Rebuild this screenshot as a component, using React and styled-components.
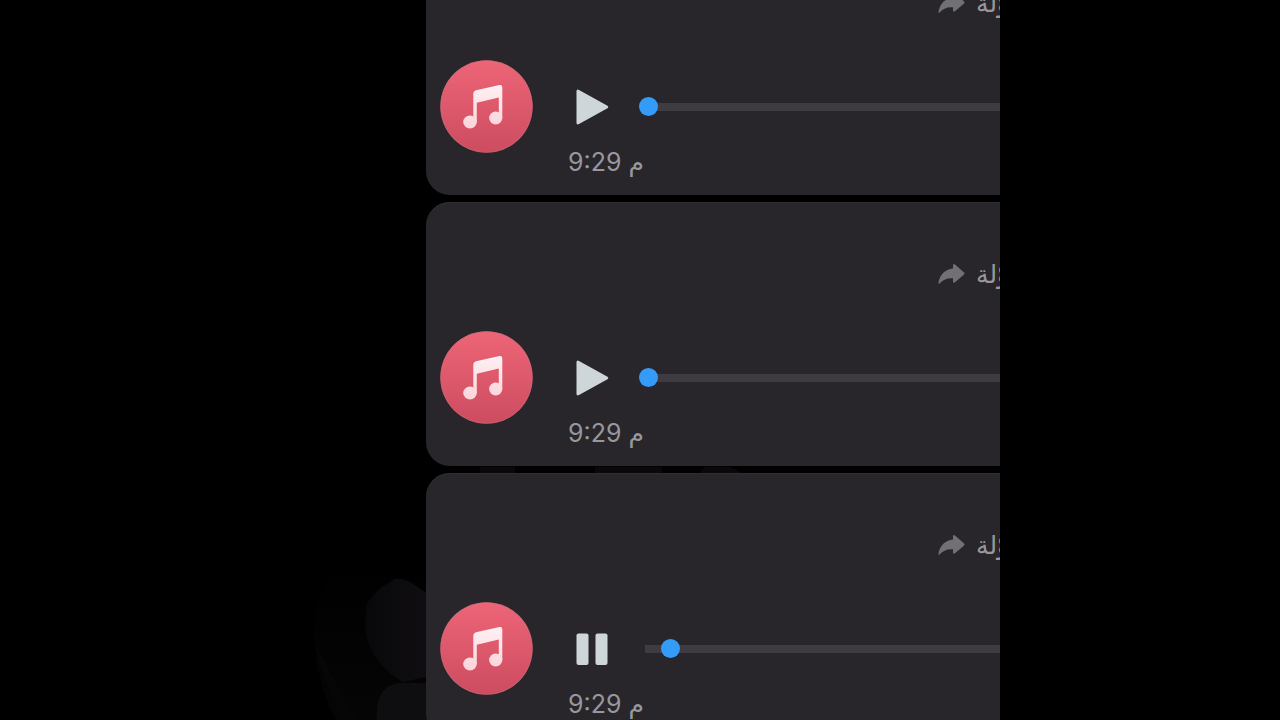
import React, { useState } from "react";
import styled, { createGlobalStyle } from "styled-components";

const GlobalStyle = createGlobalStyle`
  * { box-sizing: border-box; }
  body {
    margin: 0;
    background: #000;
    font-family: Inter, "DejaVu Sans", sans-serif;
  }
`;

const Page = styled.div`
  display: grid;
  grid-template-columns: 7fr 18fr 7fr;
  height: 100vh;
  overflow: hidden;
  background: #000;
`;

const Chat = styled.main`
  grid-column: 2;
  position: relative;
  min-width: 0;
  overflow: hidden;
`;

const Wallpaper = styled.svg`
  position: absolute;
  left: 0;
  bottom: 0;
  width: 480px;
  height: 260px;
`;

const Messages = styled.div`
  position: relative;
  display: flex;
  flex-direction: column;
  gap: 7px;
  margin-top: -69px;
  padding-left: 146px;
`;

const Bubble = styled.article`
  width: 720px;
  height: 264px;
  padding: 56px 20px 0 14px;
  border-radius: 24px;
  background: #28262b;
  box-shadow: inset 0 1px 0 #302e33;
`;

const Forwarded = styled.div`
  display: flex;
  align-items: center;
  gap: 11px;
  height: 32px;
  margin-left: 498px;
  color: #98979b;
  font-size: 25px;
  line-height: 30px;
  white-space: nowrap;
`;

const ForwardIcon = styled.svg`
  flex: none;
  width: 27px;
  height: 22px;
  fill: #717074;
`;

const Player = styled.div`
  display: grid;
  grid-template-columns: 92px 50px 1fr;
  column-gap: 36px;
  align-items: center;
  margin-top: 41px;
`;

const Artwork = styled.svg`
  display: block;
  width: 93px;
  height: 93px;
`;

const PlayButton = styled.button`
  display: block;
  width: 48px;
  height: 48px;
  padding: 0;
  border: 0;
  background: none;
  cursor: pointer;

  svg {
    display: block;
    width: 48px;
    height: 48px;
    fill: #cfd6d9;
  }
`;

const Seek = styled.input`
  appearance: none;
  display: block;
  width: 100%;
  height: 20px;
  margin: 0 0 0 -15px;
  background: none;

  &::-webkit-slider-runnable-track {
    height: 8px;
    background: linear-gradient(90deg, transparent 6px, #3e3c41 6px);
  }

  &::-webkit-slider-thumb {
    appearance: none;
    width: 19px;
    height: 19px;
    margin-top: -6px;
    border-radius: 50%;
    background: #349cf8;
  }
`;

const Time = styled.time`
  display: block;
  margin-left: 128px;
  color: #98979b;
  font-size: 25px;
  line-height: 18px;
`;

function Music({ id }) {
  return (
    <Artwork viewBox="0 0 93 93" aria-hidden="true">
      <defs>
        <linearGradient id={`${id}-disc`} x1="0" y1="0" x2="0" y2="1">
          <stop offset="0" stopColor="#ed6577" />
          <stop offset="1" stopColor="#cd4c60" />
        </linearGradient>
        <linearGradient id={`${id}-note`} gradientUnits="userSpaceOnUse" x1="0" y1="25" x2="0" y2="69">
          <stop offset="0" stopColor="#fff0f3" />
          <stop offset="1" stopColor="#fbd3da" />
        </linearGradient>
      </defs>
      <circle cx="46.500" cy="46.500" r="46.200" fill={`url(#${id}-disc)`} />
      <circle cx="46.500" cy="46.500" r="45.800" fill="none" stroke="#b77780" strokeWidth=".7" opacity=".6" />
      <g fill={`url(#${id}-note)`}>
        <path d="M36 30.300 59.500 25.100Q62.300 24.600 62.300 27.400V58H58.800V37.500L36.800 42.700V62H33.300V33.500Q33.300 31 36 30.300Z" />
        <ellipse cx="30" cy="62" rx="6.800" ry="6.500" />
        <ellipse cx="55.700" cy="58" rx="6.600" ry="6.500" />
      </g>
    </Artwork>
  );
}

function VoiceMessage({ id, playing, position }) {
  const [isPlaying, setPlaying] = useState(playing);
  const [value, setValue] = useState(position);
  return (
    <Bubble>
      <Forwarded>
        <ForwardIcon viewBox="0 0 27 22" aria-hidden="true">
          <path d="M15 2.500Q15.200.4 17 1.500L25.800 9.300Q27.200 10.500 25.800 11.700L17 19.300Q15.200 20.400 15 18.500V15.300C9 14.800 5 16.800 1.600 20.500Q.2 21.500.5 19.600C2 11.500 7 6.500 15 5.600Z" />
        </ForwardIcon>
        <span lang="ar">محوّلة</span>
      </Forwarded>
      <Player>
        <Music id={id} />
        <PlayButton
          type="button"
          aria-label={isPlaying ? "إيقاف مؤقت" : "تشغيل"}
          onClick={() => setPlaying(!isPlaying)}
        >
          <svg viewBox="0 0 48 48" aria-hidden="true">
            {isPlaying ? (
              <>
                <rect x="8.500" y="8.500" width="12" height="31.500" rx="2" />
                <rect x="27.500" y="8.500" width="12" height="31.500" rx="2" />
              </>
            ) : (
              <path d="M8.500 8.500Q8.500 5.700 11 7L39.500 22.800Q41.300 24 39.500 25.200L11 41Q8.500 42.300 8.500 39.500Z" />
            )}
          </svg>
        </PlayButton>
        <Seek
          type="range"
          min="0"
          max="1000"
          value={value}
          aria-label="موضع التشغيل"
          onChange={(e) => setValue(Number(e.target.value))}
        />
      </Player>
      <Time dateTime="21:29">9:29 م</Time>
    </Bubble>
  );
}

const messages = [
  { id: "first", playing: false, position: 0 },
  { id: "second", playing: false, position: 0 },
  { id: "third", playing: true, position: 48 },
];

export default function App() {
  return (
    <>
      <GlobalStyle />
      <Page>
        <Chat>
          <Wallpaper viewBox="0 0 480 260" aria-hidden="true">
            <defs>
              <linearGradient id="petal" x1="0" y1="0" x2="1" y2="0">
                <stop offset="0" stopColor="#080709" />
                <stop offset="1" stopColor="#100e12" />
              </linearGradient>
              <linearGradient id="leaf" x1="0" y1="0" x2="0" y2="1">
                <stop offset="0" stopColor="#000" />
                <stop offset="1" stopColor="#050505" />
              </linearGradient>
            </defs>
            <path fill="url(#leaf)" d="M85 95C60 98 42 120 36 155L34 180C37 214 46 242 56 260H150V120Z" />
            <path fill="#060606" d="M34 182C42 210 50 235 60 260H78C60 235 48 205 34 182Z" />
            <path fill="url(#petal)" d="M87 143 100 128 115 119Q123 118 130 122L150 135V216L123 222C99 208 81 185 86 151Z" />
            <path fill="#0e0d10" d="M97 260C95 237 103 226 118 223H150V260Z" />
            <path fill="#09080a" d="M200 7H235V13H200ZM315 7H382V13H315ZM424 7H450L462 13H420Z" />
          </Wallpaper>
          <Messages>
            {messages.map((message) => (
              <VoiceMessage key={message.id} {...message} />
            ))}
          </Messages>
        </Chat>
      </Page>
    </>
  );
}
